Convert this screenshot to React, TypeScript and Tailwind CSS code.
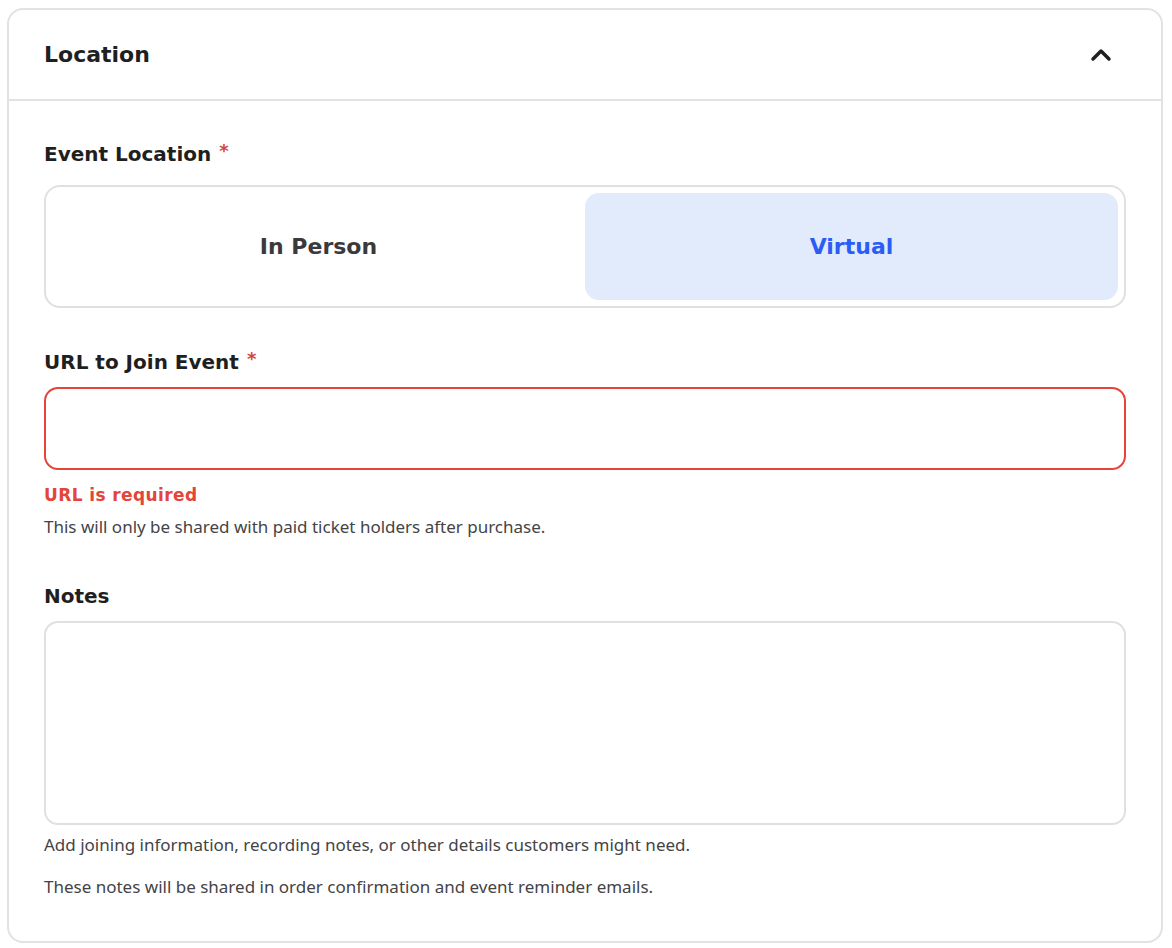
import { ChevronUp } from 'lucide-react';

const dv = { fontFamily: '"DejaVu Sans", sans-serif' };

function Req() {
  return <span className="-mt-[6px] ml-[8px] text-[18px] leading-none text-[#d9443a]">*</span>;
}

export default function App() {
  return (
    <div className="min-h-screen bg-white px-[7px] pt-[8px]" style={{ fontFamily: '"Noto Sans", Lato, sans-serif' }}>
      <div className="w-[1156px] rounded-[16px] border-2 border-[#e2e2e2] bg-white">
        <div className="flex h-[91px] items-center justify-between border-b-2 border-[#e2e2e2] pl-[35px] pr-[44px]">
          <h2 className="text-[22px] font-bold leading-[30px] text-[#1f1f1f]" style={dv}>
            Location
          </h2>
          <ChevronUp size={32} strokeWidth={2.6} className="text-[#1f1f1f]" />
        </div>

        <div className="px-[35px] pt-[39px] pb-[42px]">
          <label className="flex items-center text-[20px] font-bold leading-[28px] text-[#1f1f1f]" style={dv}>
            Event Location <Req />
          </label>
          <div className="mt-[17px] grid h-[123px] grid-cols-2 rounded-[16px] border-2 border-[#e0e0e0] p-[6px]">
            <button className="rounded-[14px] text-[22px] font-bold text-[#3a3a3c]" style={dv}>
              In Person
            </button>
            <button className="rounded-[14px] bg-[#e2ebfc] text-[22px] font-bold text-[#2b5cf6]" style={dv}>
              Virtual
            </button>
          </div>

          <label className="mt-[40px] flex items-center text-[20px] font-bold leading-[28px] text-[#1f1f1f]" style={dv}>
            URL to Join Event <Req />
          </label>
          <input
            type="text"
            className="mt-[11px] block h-[83px] w-full rounded-[14px] border-2 border-[#e4443a] px-4 outline-none"
          />
          <p className="mt-[13px] text-[17px] font-bold leading-[24px] tracking-[0.4px] text-[#e4443a]" style={dv}>
            URL is required
          </p>
          <p className="mt-[8px] text-[17px] leading-[24px] text-[#444446]">
            This will only be shared with paid ticket holders after purchase.
          </p>

          <label className="mt-[43px] block text-[20px] font-bold leading-[28px] text-[#1f1f1f]" style={dv}>
            Notes
          </label>
          <textarea className="mt-[11px] block h-[204px] w-full resize-none rounded-[14px] border-2 border-[#e0e0e0] p-4 outline-none" />
          <p className="mt-[8px] text-[17px] leading-[24px] text-[#444446]">
            Add joining information, recording notes, or other details customers might need.
          </p>
          <p className="mt-[18px] text-[17px] leading-[24px] text-[#444446]">
            These notes will be shared in order confirmation and event reminder emails.
          </p>
        </div>
      </div>
    </div>
  );
}
